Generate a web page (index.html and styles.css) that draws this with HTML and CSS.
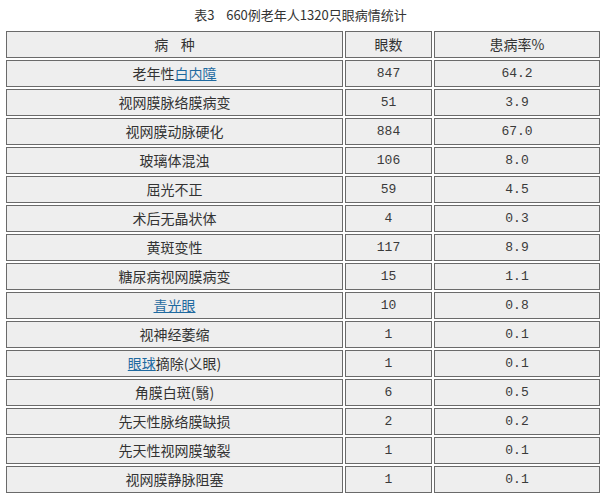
FILE: index.html
```html
<!DOCTYPE html>
<html lang="zh">
<head>
<meta charset="utf-8">
<title>表3</title>
<link rel="stylesheet" href="styles.css">
</head>
<body>
<div class="caption">表3&nbsp;&nbsp;&nbsp;&nbsp;660例老年人1320只眼病情统计</div>
<table class="stats">
  <colgroup>
    <col class="c1"><col class="c2"><col class="c3">
  </colgroup>
  <tr><td>病&nbsp;&nbsp;&nbsp;&nbsp;种</td><td>眼数</td><td>患病率%</td></tr>
  <tr><td>老年性<a href="#">白内障</a></td><td class="num">847</td><td class="num">64.2</td></tr>
  <tr><td>视网膜脉络膜病变</td><td class="num">51</td><td class="num">3.9</td></tr>
  <tr><td>视网膜动脉硬化</td><td class="num">884</td><td class="num">67.0</td></tr>
  <tr><td>玻璃体混浊</td><td class="num">106</td><td class="num">8.0</td></tr>
  <tr><td>屈光不正</td><td class="num">59</td><td class="num">4.5</td></tr>
  <tr><td>术后无晶状体</td><td class="num">4</td><td class="num">0.3</td></tr>
  <tr><td>黄斑变性</td><td class="num">117</td><td class="num">8.9</td></tr>
  <tr><td>糖尿病视网膜病变</td><td class="num">15</td><td class="num">1.1</td></tr>
  <tr><td><a href="#">青光眼</a></td><td class="num">10</td><td class="num">0.8</td></tr>
  <tr><td>视神经萎缩</td><td class="num">1</td><td class="num">0.1</td></tr>
  <tr><td><a href="#">眼球</a>摘除(义眼)</td><td class="num">1</td><td class="num">0.1</td></tr>
  <tr><td>角膜白斑(翳)</td><td class="num">6</td><td class="num">0.5</td></tr>
  <tr><td>先天性脉络膜缺损</td><td class="num">2</td><td class="num">0.2</td></tr>
  <tr><td>先天性视网膜皱裂</td><td class="num">1</td><td class="num">0.1</td></tr>
  <tr><td>视网膜静脉阻塞</td><td class="num">1</td><td class="num">0.1</td></tr>
</table>
</body>
</html>
```
FILE: styles.css
```css
html, body {
  margin: 0;
  padding: 0;
  background: #ffffff;
}
body {
  font-family: "Noto Sans CJK SC", "Noto Sans", sans-serif;
  color: #333333;
}
.caption {
  height: 29px;
  line-height: 30px;
  font-size: 13px;
  text-align: center;
  color: #333333;
}
.stats {
  margin-left: 4px;
  border-collapse: separate;
  border-spacing: 2px;
  table-layout: fixed;
  width: 595px;
}
.stats col.c1 { width: 337px; }
.stats col.c2 { width: 87px; }
.stats col.c3 { width: 166px; }
.stats td {
  height: 25px;
  padding: 0;
  border: 1px solid #6a6a6a;
  background: #eeeeee;
  text-align: center;
  vertical-align: middle;
  font-size: 14px;
  line-height: 25px;
  color: #333333;
}
.stats td.num {
  font-family: "Liberation Mono", "DejaVu Sans Mono", monospace;
  font-size: 13px;
  color: #3a3a3a;
}
.stats a {
  color: #1f6aa0;
  text-decoration: underline;
}
```
